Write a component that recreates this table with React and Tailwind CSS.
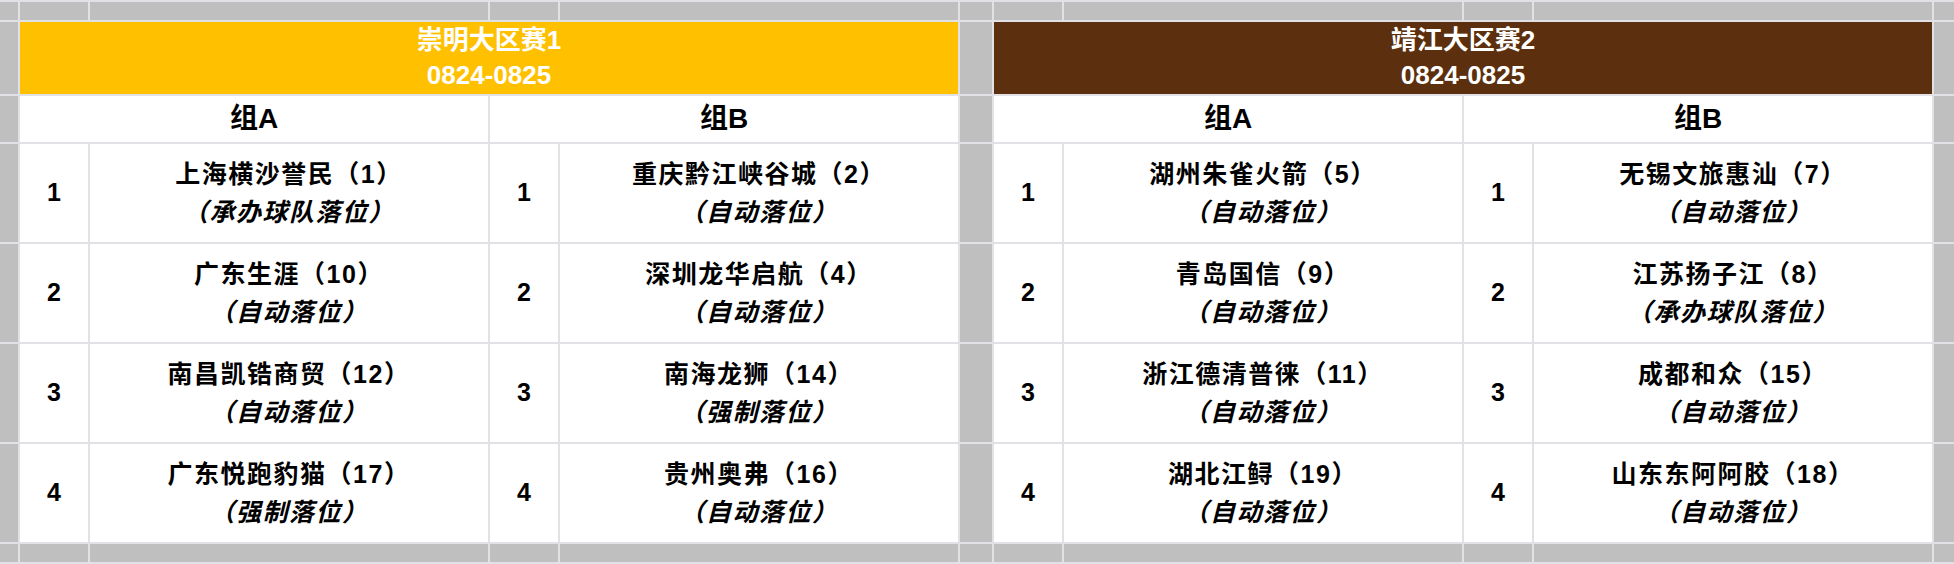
import React from "react";

const FONT = { fontFamily: '"Liberation Sans", "Noto Sans CJK SC", sans-serif' };

const regions = [
  {
    title: "崇明大区赛1",
    date: "0824-0825",
    bg: "bg-[#ffc000]",
    A: [
      ["上海横沙誉民（1）", "承办球队落位"],
      ["广东生涯（10）", "自动落位"],
      ["南昌凯锆商贸（12）", "自动落位"],
      ["广东悦跑豹猫（17）", "强制落位"],
    ],
    B: [
      ["重庆黔江峡谷城（2）", "自动落位"],
      ["深圳龙华启航（4）", "自动落位"],
      ["南海龙狮（14）", "强制落位"],
      ["贵州奥弗（16）", "自动落位"],
    ],
  },
  {
    title: "靖江大区赛2",
    date: "0824-0825",
    bg: "bg-[#5c300e]",
    A: [
      ["湖州朱雀火箭（5）", "自动落位"],
      ["青岛国信（9）", "自动落位"],
      ["浙江德清普徕（11）", "自动落位"],
      ["湖北江鲟（19）", "自动落位"],
    ],
    B: [
      ["无锡文旅惠汕（7）", "自动落位"],
      ["江苏扬子江（8）", "承办球队落位"],
      ["成都和众（15）", "自动落位"],
      ["山东东阿阿胶（18）", "自动落位"],
    ],
  },
];

function Gray() {
  return <div className="bg-[#bfbfbf]" />;
}

function NumCell({ n }) {
  return (
    <div className="bg-white flex items-center justify-center text-[25px] font-bold text-black">
      {n}
    </div>
  );
}

function NameCell({ name, note }) {
  return (
    <div className="bg-white flex flex-col items-center justify-center text-black font-bold text-[25px] leading-[38px] tracking-[1.5px] whitespace-nowrap">
      <div>{name}</div>
      <div className="italic">（{note}）</div>
    </div>
  );
}

export default function App() {
  const cells = [];
  for (let i = 0; i < 11; i++) cells.push(<Gray key={"t" + i} />);
  cells.push(<Gray key="h0" />);
  regions.forEach((r, ri) => {
    cells.push(
      <div
        key={"hd" + ri}
        className={`${r.bg} col-span-4 flex flex-col items-center justify-center text-white font-bold text-[26px] leading-[35px]`}
      >
        <div>{r.title}</div>
        <div>{r.date}</div>
      </div>
    );
    cells.push(<Gray key={"hs" + ri} />);
  });
  cells.push(<Gray key="g0" />);
  regions.forEach((r, ri) => {
    ["组A", "组B"].forEach((g, gi) => {
      cells.push(
        <div
          key={"g" + ri + gi}
          className="bg-white col-span-2 flex items-center justify-center text-black font-bold text-[28px]"
        >
          {g}
        </div>
      );
    });
    cells.push(<Gray key={"gs" + ri} />);
  });
  for (let row = 0; row < 4; row++) {
    cells.push(<Gray key={"d" + row} />);
    regions.forEach((r, ri) => {
      [r.A, r.B].forEach((grp, gi) => {
        cells.push(<NumCell key={"n" + row + ri + gi} n={row + 1} />);
        cells.push(
          <NameCell key={"m" + row + ri + gi} name={grp[row][0]} note={grp[row][1]} />
        );
      });
      cells.push(<Gray key={"ds" + row + ri} />);
    });
  }
  for (let i = 0; i < 11; i++) cells.push(<Gray key={"b" + i} />);

  return (
    <div
      style={FONT}
      className="w-[1954px] h-[564px] bg-[#e1e1e6] pt-[2px] pb-[2px] grid grid-cols-[18px_68px_398px_68px_398px_32px_68px_398px_68px_398px_20px] grid-rows-[18px_72px_46px_98px_98px_98px_98px_18px] gap-[2px] overflow-hidden"
    >
      {cells}
    </div>
  );
}
